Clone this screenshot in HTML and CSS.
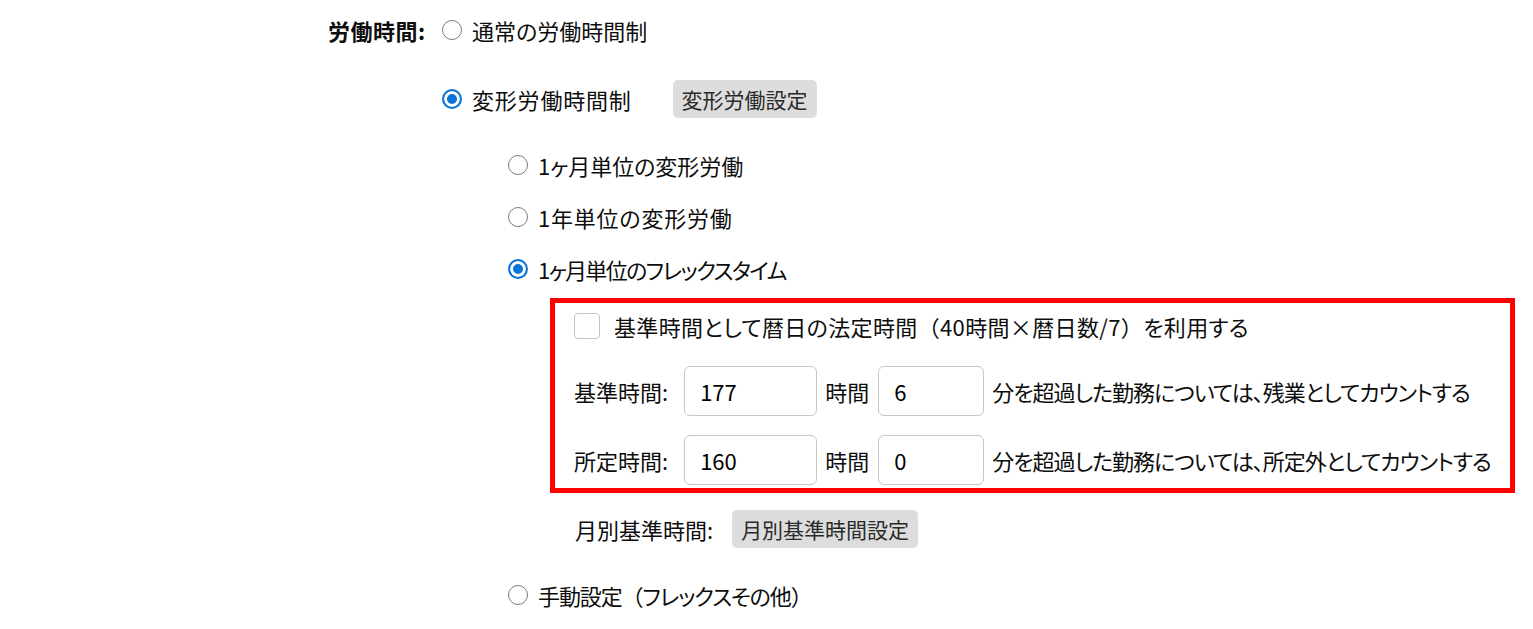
FILE: index.html
```html
<!DOCTYPE html>
<html lang="ja">
<head>
<meta charset="utf-8">
<title>労働時間設定</title>
<link rel="stylesheet" href="styles.css">
</head>
<body>
<div class="field">
  <div class="field-label">労働時間:</div>
  <div class="field-body">
    <label class="opt opt-first"><input type="radio" name="wt" class="radio"><span>通常の労働時間制</span></label>
    <div class="opt opt-second">
      <label class="opt-inline"><input type="radio" name="wt" class="radio" checked><span class="wide">変形労働時間制</span></label>
      <button class="btn btn-henkei">変形労働設定</button>
    </div>
    <div class="sub">
      <label class="opt opt-sub-first"><input type="radio" name="sub" class="radio"><span>1ヶ月単位の変形労働</span></label>
      <label class="opt opt-sub"><input type="radio" name="sub" class="radio"><span class="wide">1年単位の変形労働</span></label>
      <label class="opt opt-sub"><input type="radio" name="sub" class="radio" checked><span class="tight">1ヶ月単位のフレックスタイム</span></label>
      <div class="redbox">
        <label class="check-row"><input type="checkbox" class="check"><span class="check-text">基準時間として暦日の法定時間<span class="fw">（</span>40時間×暦日数/7<span class="fw">）</span>を利用する</span></label>
        <div class="hours-row hours-row-first">
          <span class="row-label">基準時間:</span>
          <input type="text" class="num num-h" value="177">
          <span class="unit">時間</span>
          <input type="text" class="num num-m" value="6">
          <span class="desc">分を超過した勤務については、残業としてカウントする</span>
        </div>
        <div class="hours-row hours-row-second">
          <span class="row-label">所定時間:</span>
          <input type="text" class="num num-h" value="160">
          <span class="unit">時間</span>
          <input type="text" class="num num-m" value="0">
          <span class="desc">分を超過した勤務については、所定外としてカウントする</span>
        </div>
      </div>
      <div class="monthly">
        <span class="row-label">月別基準時間:</span>
        <button class="btn btn-monthly">月別基準時間設定</button>
      </div>
      <label class="opt opt-manual"><input type="radio" name="sub" class="radio"><span class="tight-s">手動設定<span class="fw">（</span>フレックスその他<span class="fw">）</span></span></label>
    </div>
  </div>
</div>
</body>
</html>
```
FILE: styles.css
```css
html, body {
  margin: 0;
  padding: 0;
  background: #ffffff;
}

body {
  font-family: "Noto Sans CJK JP", "Noto Sans", sans-serif;
  font-size: 22px;
  color: #0d0d0d;
  font-feature-settings: "palt";
}

.fw {
  font-feature-settings: normal;
}

.wide {
  letter-spacing: 0.8px;
}

.tight {
  letter-spacing: -1.6px;
}

.tight-s {
  letter-spacing: -1.1px;
}

.field {
  display: flex;
  align-items: flex-start;
  padding: 10px 0 0 328px;
}

.field-label {
  width: 114px;
  height: 40px;
  line-height: 40px;
  font-weight: bold;
  letter-spacing: 0.5px;
  white-space: nowrap;
}

.field-body {
  display: flex;
  flex-direction: column;
}

.opt,
.opt-inline {
  display: flex;
  align-items: center;
  height: 40px;
  white-space: nowrap;
}

.opt-inline {
  gap: 10px;
}

.opt > .radio {
  margin-right: 10px;
}

.opt-second {
  margin-top: 29px;
}

.radio {
  appearance: none;
  -webkit-appearance: none;
  width: 20px;
  height: 20px;
  margin: 0;
  border: 1.5px solid #7a7a7a;
  border-radius: 50%;
  background: #ffffff;
  flex: none;
  box-sizing: border-box;
}

.radio:checked {
  border: 2px solid #0a74d8;
  background: #0a74d8;
  box-shadow: inset 0 0 0 3px #ffffff;
}

.btn {
  font-family: inherit;
  font-feature-settings: normal;
  font-size: 21px;
  color: #2a2a2a;
  background: #dddddd;
  border: none;
  border-radius: 5px;
  height: 38px;
  padding: 0 9px;
  cursor: pointer;
}

.btn-henkei {
  margin-left: 41px;
}

.sub {
  display: flex;
  flex-direction: column;
  padding-left: 66px;
}

.opt-sub-first {
  margin-top: 26px;
}

.opt-sub {
  margin-top: 12px;
}

.redbox {
  margin: 9px 0 0 42px;
  width: 965px;
  box-sizing: border-box;
  border: 5px solid #ff0000;
  padding: 10px 0 3px 19px;
  display: flex;
  flex-direction: column;
}

.check-row {
  display: flex;
  align-items: center;
  height: 26px;
  white-space: nowrap;
}

.check-text {
  letter-spacing: 0.35px;
}

.check {
  appearance: none;
  -webkit-appearance: none;
  width: 26px;
  height: 26px;
  margin: 0 14px 0 0;
  border: 1px solid #c6c6c6;
  border-radius: 4px;
  background: #ffffff;
  box-sizing: border-box;
  flex: none;
}

.hours-row {
  display: flex;
  align-items: center;
  height: 50px;
  white-space: nowrap;
}

.hours-row-first {
  margin-top: 27px;
}

.hours-row-second {
  margin-top: 19px;
}

.row-label {
  margin-right: 16px;
}

.num {
  font-family: inherit;
  font-size: 22px;
  color: #000000;
  height: 50px;
  box-sizing: border-box;
  border: 1px solid #c8c8c8;
  border-radius: 6px;
  padding: 0 15px;
  background: #ffffff;
  outline: none;
}

.num-h {
  width: 133px;
}

.num-m {
  width: 106px;
}

.unit {
  margin: 0 9px 0 8px;
}

.desc {
  margin-left: 8px;
  letter-spacing: -1px;
}

.monthly {
  display: flex;
  align-items: center;
  height: 38px;
  margin: 17px 0 0 67px;
  white-space: nowrap;
}

.monthly .row-label {
  margin-right: 19px;
}

.opt-manual {
  margin-top: 27px;
}
```
